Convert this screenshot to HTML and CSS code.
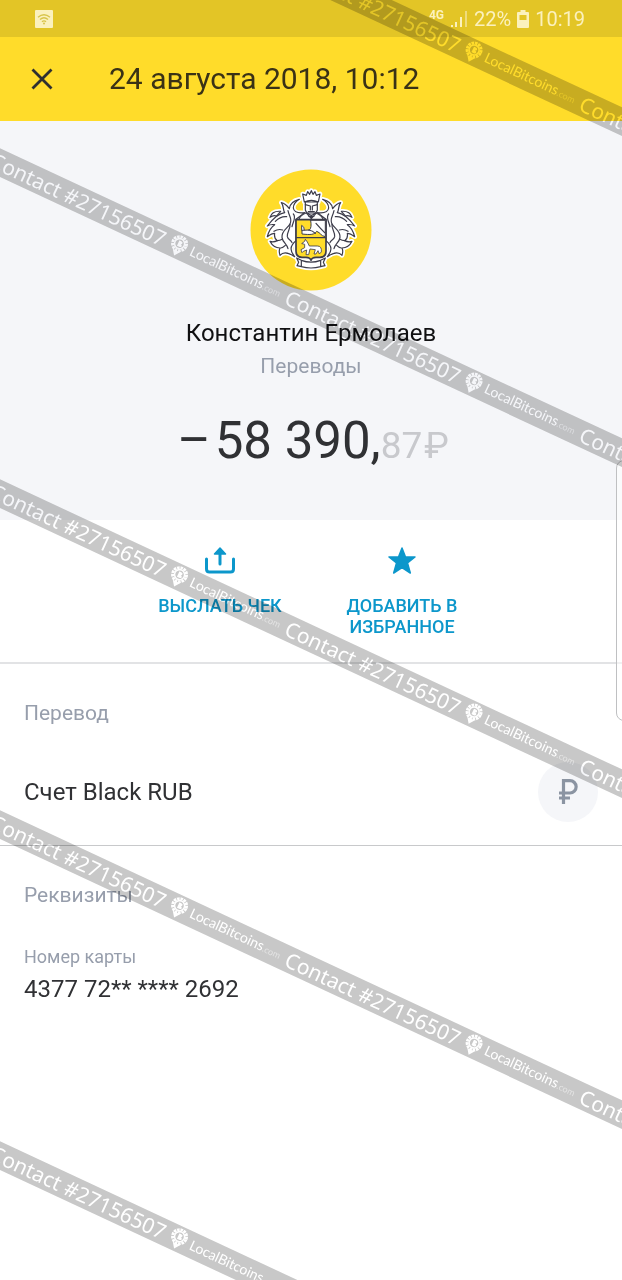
FILE: index.html
```html
<!DOCTYPE html>
<html lang="ru">
<head>
<meta charset="utf-8">
<meta name="viewport" content="width=device-width, initial-scale=1">
<title>24 августа 2018, 10:12</title>
<link rel="stylesheet" href="styles.css">
</head>
<body>
<div class="screen">
  <div class="status">
    <svg class="status-wifi" width="18" height="18" viewBox="0 0 18 18"><rect width="18" height="18" rx="1" fill="#fbf1bd"/><g fill="none" stroke="#d8c44a" stroke-width="1.4"><path d="M3 7.200q6-5 12 0M5 9.500q4-3.400 8 0M7 11.700q2-1.600 4 0"/></g><circle cx="9" cy="13.500" r="1" fill="#d8c44a"/></svg>
    <div class="status-right">
      <span class="net">4G</span>
      <svg width="18" height="18" viewBox="0 0 18 18"><g fill="#fbf1bd"><rect x="1" y="15" width="2" height="2"/><rect x="5" y="12" width="2" height="5"/><rect x="10" y="7" width="2" height="10"/></g><rect x="15" y="1" width="2" height="16" fill="#efdc7c"/></svg>
      <span class="pct">22%</span>
      <svg class="battery" width="12" height="18" viewBox="0 0 12 18"><path fill="#fbf1bd" d="M3.500 0h5v2H11q1 0 1 1v14q0 1-1 1H1q-1 0-1-1V3q0-1 1-1h2.500z"/><path fill="#e3c526" d="M2.500 5h7v5h-7z"/></svg>
      <span>10:19</span>
    </div>
  </div>

  <header class="bar">
    <button class="close" type="button" aria-label="Закрыть">
      <svg width="22" height="22" viewBox="0 0 22 22"><path d="M1.500 1.500l19 19M20.500 1.500l-19 19" stroke="#2f3030" stroke-width="2.800" fill="none"/></svg>
    </button>
    <h1 class="title">24 августа 2018, 10:12</h1>
  </header>

  <main>
    <section class="hero">
      <svg class="crest" width="122" height="122" viewBox="0 0 122 122">
        <defs>
          <path id="mantle" d="M128 98C112 100 96 98 94 84 94 74 102 64 112 58 94 62 84 70 82 86 76 78 70 70 58 68 66 78 62 88 68 98 50 100 36 112 16 138 26 132 30 133 38 134 26 142 20 154 16 170 24 164 30 160 38 160 36 172 40 178 46 182 38 186 30 186 24 184 30 196 40 204 54 204 50 212 52 220 54 226 64 214 78 216 98 230 84 214 82 198 102 182V118z"/>
          <path id="leaf" d="M24 112Q30 92 56 94L44 108Q34 104 24 112z"/>
          <g id="veins" fill="none">
            <path d="M78 92C82 112 92 116 84 132 78 144 58 152 60 172 62 188 74 190 78 206"/>
            <path d="M84 132C86 148 74 156 76 170 78 180 88 180 90 188M94 102C104 112 92 128 90 140M74 110C58 108 48 116 40 124M62 150C50 146 42 150 36 154M60 178C54 182 50 182 46 182M70 196C64 202 60 204 56 204"/>
          </g>
          <path id="body" d="M110 120Q114 106 132 99H162Q180 106 184 120zM130 66V90Q134 102 148 106 162 102 166 90V66zM127 66L122 42 133 46 137 35 143 43 148 32 153 43 159 35 163 46 174 42 169 66Q148 56 127 66z"/>
          <path id="shield" d="M102 119H192V214Q192 232 174 232H162Q150 232 147 241 144 232 132 232H120Q102 232 102 214z"/>
          <path id="scroll" d="M118 241Q147 252 176 241V260Q147 268 118 260zM118 241L104 234 110 247 105 257 118 260M176 241L190 234 184 247 189 257 176 260"/>
        </defs>
        <circle cx="61" cy="61" r="60.500" fill="#ffdc2a"/>
        <g transform="translate(12 11) scale(.3333)" stroke-linejoin="round" stroke-linecap="round">
          <g fill="#fff" stroke="#fff" stroke-width="14">
            <use href="#mantle"/><use href="#leaf"/>
            <g transform="matrix(-1 0 0 1 294 0)"><use href="#mantle"/><use href="#leaf"/></g>
            <use href="#body"/><use href="#shield"/><use href="#scroll"/>
          </g>
          <g fill="#fff" stroke="#3c3c4a" stroke-width="3.600">
            <use href="#mantle"/><use href="#leaf"/><use href="#veins"/>
            <g transform="matrix(-1 0 0 1 294 0)"><use href="#mantle"/><use href="#leaf"/><use href="#veins"/></g>
            <use href="#body"/>
            <path d="M130 74L145 78V90M166 74L151 78V90M139 95H157M134 100L148 116 162 100M140 109H156M148 109V118" fill="none"/>
            <use href="#shield" fill="#ffdc2a" stroke-width="5"/>
            <path d="M146 121H190V170C176 168 176 158 164 154 158 164 146 165 120 162V151L142 150Q150 144 146 121zM119 151V136Q128 140 127 150" stroke-width="3"/>
            <path d="M162 130Q178 148 188 158M140 150Q152 152 160 160" fill="none"/>
            <path d="M104 173H190" stroke-width="4"/>
            <path d="M120 190L128 184 130 178 136 186 142 198H166Q180 198 178 216L172 222 168 212 162 222H156L160 209 144 207 140 224H132L134 210 124 214 120 218 117 209 128 203 128 194z" stroke-width="2.500"/>
            <use href="#scroll"/>
          </g>
        </g>
      </svg>
      <h2 class="name">Константин Ермолаев</h2>
      <p class="kind">Переводы</p>
      <p class="amount"><span class="minus">–</span><span class="whole">58 390,</span><span class="cents">87</span><span class="cur">₽</span></p>
    </section>

    <section class="actions">
      <button class="action" type="button">
        <svg width="32" height="28" viewBox="0 0 32 28"><g fill="none" stroke="#0c97cb" stroke-width="3" stroke-linecap="round" stroke-linejoin="round"><path d="M2.500 12v10q0 3 3 3h21q3 0 3-3v-10M16 4v13"/></g><path d="M16 1l5.500 6h-11z" fill="#0c97cb" stroke="#0c97cb" stroke-width="1.500" stroke-linejoin="round"/></svg>
        <span>ВЫСЛАТЬ ЧЕК</span>
      </button>
      <button class="action" type="button">
        <svg width="28" height="28" viewBox="0 0 28 28"><path fill="#0c97cb" stroke="#0c97cb" stroke-width="1.500" stroke-linejoin="round" d="M14 1l3.500 9h9.500l-7.500 6 2.800 10L14 20.500 5.700 26l2.800-10L1 10h9.500z"/></svg>
        <span>ДОБАВИТЬ В ИЗБРАННОЕ</span>
      </button>
    </section>

    <section class="block">
      <h3 class="label">Перевод</h3>
      <div class="account">
        <span class="value">Счет Black RUB</span>
        <span class="coin"><svg width="20" height="26" viewBox="0 0 20 26"><path d="M5.500 25V1.700h6.500a6 6 0 0 1 0 12.300H1M1 19h11" fill="none" stroke="#8b94a2" stroke-width="3.200"/></svg></span>
      </div>
    </section>

    <section class="block details">
      <h3 class="label">Реквизиты</h3>
      <dl class="field">
        <dt>Номер карты</dt>
        <dd class="value">4377 72** **** 2692</dd>
      </dl>
    </section>
  </main>

  <div class="edge"></div>

  <svg class="symbols" width="0" height="0">
    <symbol id="pin" viewBox="0 0 18 22"><circle cx="9" cy="8.500" r="7" fill="none" stroke="#fff" stroke-width="3" stroke-dasharray="2.600 .8"/><circle cx="9" cy="8.500" r="5" fill="none" stroke="#fff" stroke-width="1.500"/><path d="M7.500 5.500h2q2 0 2 1.500t-1.500 1.500q2 0 2 1.500t-2 1.500H7.500zM5 16h8l-4 5.500z" fill="#fff"/></symbol>
  </svg>
  <div class="marks">
    <div class="rows">
      <div class="ribbon lead">
        <div class="unit"><span class="contact">Contact #27156507</span><svg class="pin"><use href="#pin"/></svg><span class="brand">LocalBitcoins<small>.com</small></span></div>
        <div class="unit"><span class="contact">Contact #27156507</span></div>
      </div>
      <div class="ribbon">
        <div class="unit"><span class="contact">Contact #27156507</span><svg class="pin"><use href="#pin"/></svg><span class="brand">LocalBitcoins<small>.com</small></span></div>
        <div class="unit"><span class="contact">Contact #27156507</span><svg class="pin"><use href="#pin"/></svg><span class="brand">LocalBitcoins<small>.com</small></span></div>
        <div class="unit"><span class="contact">Contact #27156507</span></div>
      </div>
      <div class="ribbon">
        <div class="unit"><span class="contact">Contact #27156507</span><svg class="pin"><use href="#pin"/></svg><span class="brand">LocalBitcoins<small>.com</small></span></div>
        <div class="unit"><span class="contact">Contact #27156507</span><svg class="pin"><use href="#pin"/></svg><span class="brand">LocalBitcoins<small>.com</small></span></div>
        <div class="unit"><span class="contact">Contact #27156507</span></div>
      </div>
      <div class="ribbon">
        <div class="unit"><span class="contact">Contact #27156507</span><svg class="pin"><use href="#pin"/></svg><span class="brand">LocalBitcoins<small>.com</small></span></div>
        <div class="unit"><span class="contact">Contact #27156507</span><svg class="pin"><use href="#pin"/></svg><span class="brand">LocalBitcoins<small>.com</small></span></div>
        <div class="unit"><span class="contact">Contact #27156507</span></div>
      </div>
      <div class="ribbon">
        <div class="unit"><span class="contact">Contact #27156507</span><svg class="pin"><use href="#pin"/></svg><span class="brand">LocalBitcoins</span></div>
      </div>
    </div>
  </div>
</div>
</body>
</html>
```
FILE: styles.css
```css
* { box-sizing: border-box; }
body, h1, h2, h3, p, dl, dd { margin: 0; font-weight: 400; }
body { background: #fff; color: #303134; font-family: Roboto, "Noto Sans", sans-serif; }
button { border: 0; padding: 0; background: none; font: inherit; color: inherit; cursor: pointer; }
svg { display: block; flex: none; }

.screen { position: relative; min-height: 100vh; overflow: hidden; background: #fff; }

.status {
  display: flex; align-items: center; justify-content: space-between;
  height: 37px; padding: 0 37px 0 35px;
  background: #e3c526; color: #fbf1bd; font-size: 20px; line-height: 24px;
}
.status-right { display: flex; align-items: center; gap: 6px; }
.net { align-self: flex-start; font-size: 12px; line-height: 16px; font-weight: 700; }

.bar { display: flex; align-items: center; gap: 56px; height: 84px; padding: 0 31px; background: #ffdc2a; }
.title { font-size: 30px; line-height: 36px; color: #3a3216; }

.hero { display: flex; flex-direction: column; align-items: center; height: 399px; padding-top: 48px; background: #f5f6f9; }
.name { margin-top: 26px; font-size: 24px; line-height: 32px; color: #101012; }
.kind { margin-top: 4px; font-size: 21px; line-height: 26px; color: #979eac; }
.amount { display: flex; align-items: baseline; margin-top: 30px; padding-left: 4px; line-height: 64px; }
.minus, .whole { font-size: 51px; }
.minus { margin-right: 4px; }
.cents, .cur { font-size: 37px; color: #c8c9cd; }
.cur { margin-left: 2px; }

.actions { display: flex; justify-content: center; gap: 40px; padding: 27px 0 25px; border-bottom: 2px solid #e2e3e5; }
.action { display: flex; flex-direction: column; align-items: center; gap: 20px; width: 142px; color: #0c97cb; font-size: 18px; line-height: 21px; font-weight: 500; }

.block { padding: 35px 24px 23px; border-bottom: 1px solid #c8c9cb; }
.label { font-size: 21px; line-height: 28px; color: #979eac; }
.account { display: flex; align-items: center; justify-content: space-between; margin-top: 35px; }
.value { font-size: 24px; line-height: 32px; }
.coin { display: grid; place-items: center; width: 60px; height: 60px; border-radius: 50%; background: #f5f6f9; }
.details { border-bottom: 0; }
.field { margin-top: 36px; }
.field dt { font-size: 18px; line-height: 24px; color: #979eac; }
.field dd { margin-top: 4px; }

.edge { position: absolute; right: -10px; top: 460px; width: 16px; height: 261px; border: 1px solid #bfc0c2; border-radius: 8px; background: rgba(255, 255, 255, .5); }

.symbols { position: absolute; }
.marks { position: absolute; inset: 0; overflow: hidden; pointer-events: none; mix-blend-mode: multiply; }
.rows { position: absolute; left: -10px; top: -186px; display: flex; flex-direction: column; gap: 305px; }
.ribbon { display: flex; width: 975px; height: 26px; padding-left: 2px; background: #c8c8c8; transform: rotate(25deg); transform-origin: left center; }
.lead { padding-left: 327px; }
.unit { display: flex; align-items: center; width: 325px; flex: none; color: #fff; white-space: nowrap; }
.contact { width: 197px; font: 21px/24px "Noto Sans", sans-serif; }
.pin { width: 18px; height: 22px; }
.brand { margin-left: 4px; font: 14px/20px Lato, sans-serif; }
.brand small { font-size: 9px; opacity: .5; }
```
